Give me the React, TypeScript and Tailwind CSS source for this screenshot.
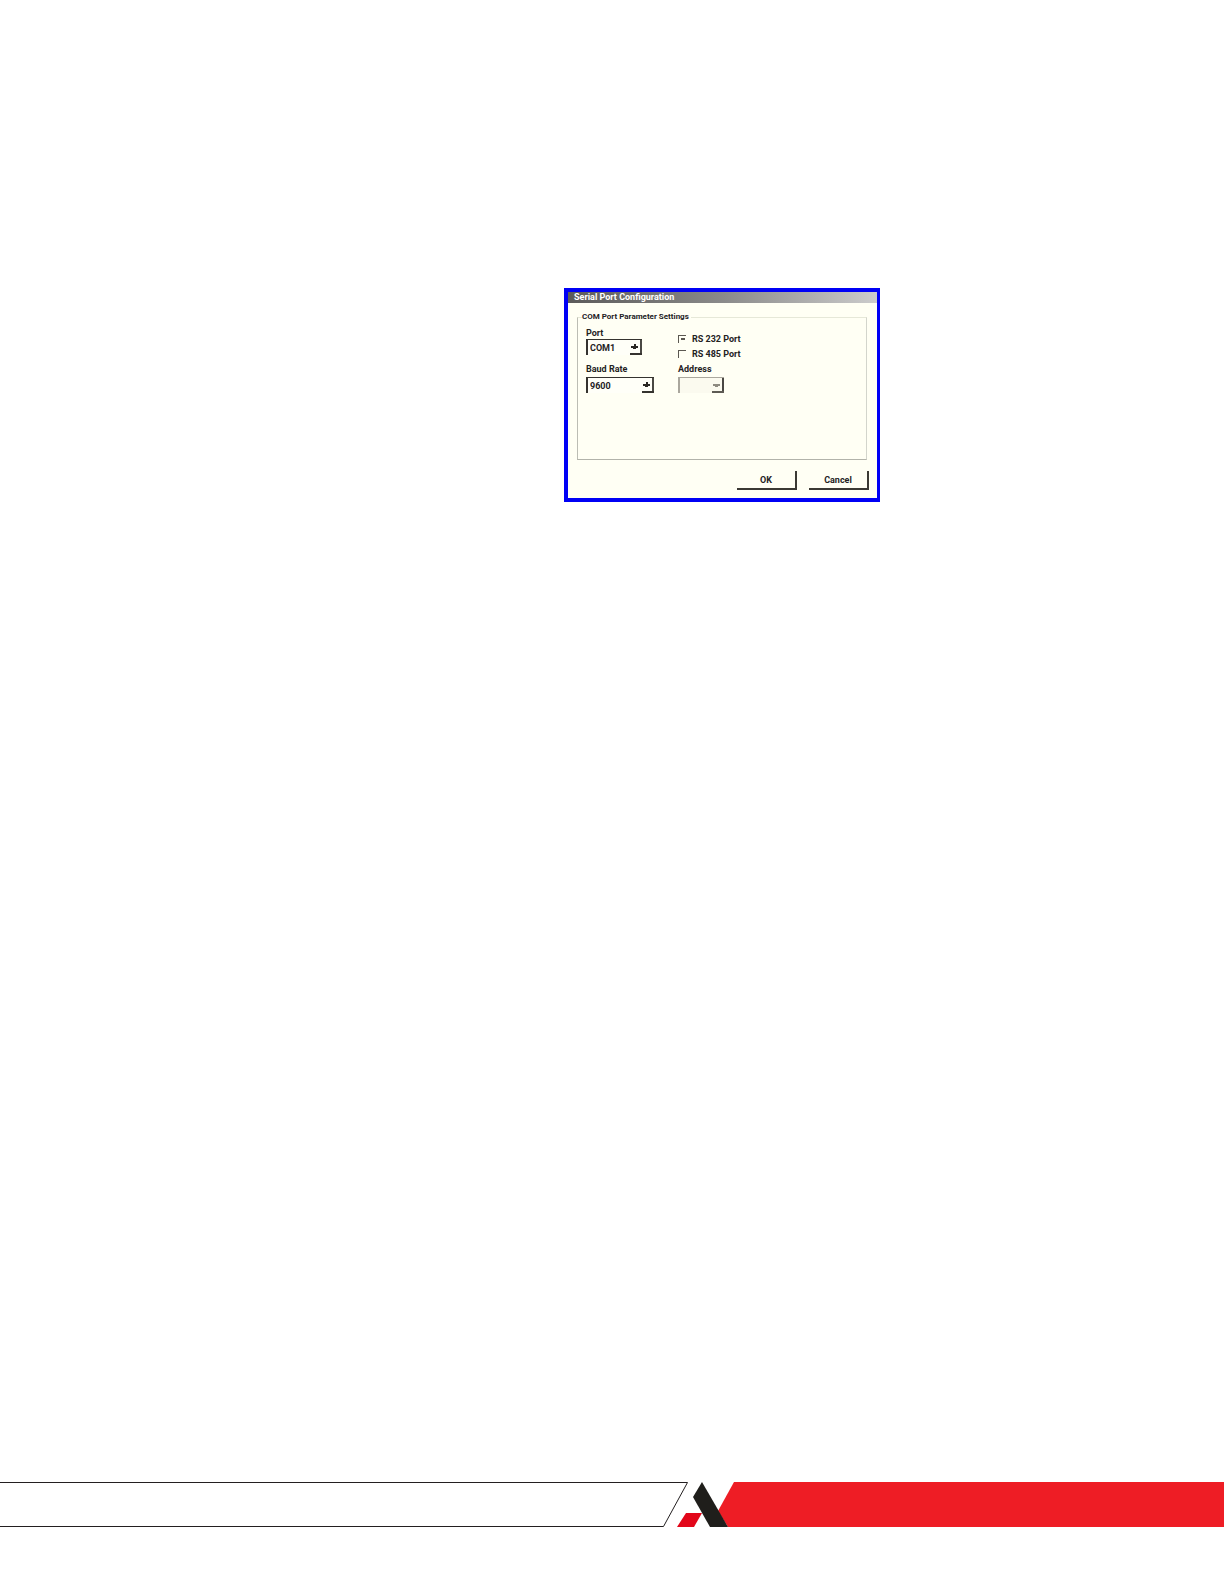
import { useState } from 'react';
import type { ReactNode } from 'react';

const ports = ['COM1', 'COM2', 'COM3', 'COM4'];
const baudRates = ['9600', '19200', '38400', '57600'];
const modes = [
  { id: 'rs232', label: 'RS 232 Port' },
  { id: 'rs485', label: 'RS 485 Port' },
];

type SelectBoxProps = {
  id: string;
  width: string;
  options: string[];
  disabled?: boolean;
};

function SelectBox({ id, width, options, disabled }: SelectBoxProps) {
  const ink = disabled ? '#8d8a80' : '#2a2824';
  return (
    <div className={`relative h-4 ${width}`}>
      <select
        id={id}
        disabled={disabled}
        className={`block h-4 w-full appearance-none border-t border-l-2 px-0.5 text-[9px] leading-3 font-bold text-[#24221f] ${
          disabled ? 'border-[#aaa79d] bg-[#fbfaef]' : 'border-[#35332f] bg-[#fffff8]'
        }`}
      >
        {options.map(o => (
          <option key={o}>{o}</option>
        ))}
      </select>
      {/* drop button */}
      <svg className="pointer-events-none absolute top-0 right-0 h-4 w-3" viewBox="0 0 12 16" aria-hidden="true">
        <path d="M11 1v14.500" stroke="#4a4843" strokeWidth="2" />
        <path d="M0 15h12" stroke={disabled ? '#5e5b54' : '#35332f'} strokeWidth="2" />
        <path d="M1 7h7v2H6v1H3V9H1z" fill={ink} />
        {!disabled && <path d="M4 5h2v2H4z" fill={ink} />}
      </svg>
    </div>
  );
}

function PushButton({ children }: { children: ReactNode }) {
  return (
    <button
      type="button"
      className="h-[19px] w-[60px] border-r-2 border-b-2 border-[#3b3934] bg-[#fffff4] text-[9px] leading-4 font-bold text-[#24221f]"
    >
      {children}
    </button>
  );
}

function SerialPortDialog() {
  const [mode, setMode] = useState('rs232');

  return (
    <section
      aria-labelledby="dialog-title"
      className="flex min-h-[214px] w-[316px] flex-col border-4 border-r-[3px] border-[#0000f5] bg-[#fffff4] text-[9px] leading-3"
    >
      <h1
        id="dialog-title"
        className="bg-linear-to-r from-[#5c5b5a] via-[#8a8a8a] to-[#cccccc] pb-px pl-1.5 leading-[10px] font-bold text-white"
      >
        Serial Port Configuration
      </h1>

      <form className="flex grow flex-col pt-2 pr-2.5 pl-[9px]" onSubmit={e => e.preventDefault()}>
        <fieldset className="h-[149px] border border-t-[#e6e8d8] border-r-[#d3d5cc] border-b-[#b2b3aa] border-l-[#bcbdb4] pt-1 pl-2">
          <legend className="-ml-1 pr-0.5 text-[8px]">COM Port Parameter Settings</legend>

          <div className="flex">
            <div className="w-[92px]">
              <label htmlFor="port" className="block">Port</label>
              <SelectBox id="port" width="w-14" options={ports} />
              <label htmlFor="baud" className="mt-2 block">Baud Rate</label>
              <div className="mt-0.5">
                <SelectBox id="baud" width="w-[68px]" options={baudRates} />
              </div>
            </div>

            <div className="pt-1">
              {modes.map(({ id, label }) => (
                <label key={id} className="flex h-[15px] items-center gap-1.5">
                  <input
                    type="radio"
                    name="mode"
                    value={id}
                    checked={mode === id}
                    onChange={() => setMode(id)}
                    className="flex size-2 appearance-none items-center justify-center border-t border-l border-[#5b5851] before:h-0.5 before:w-1 checked:before:bg-[#5b5851]"
                  />
                  {label}
                </label>
              ))}
              <label htmlFor="address" className="mt-0.5 block">Address</label>
              <div className="mt-0.5">
                <SelectBox id="address" width="w-[46px]" options={['']} disabled />
              </div>
            </div>
          </div>
        </fieldset>

        <div className="mt-[11px] -mr-0.5 flex justify-end gap-3">
          <PushButton>OK</PushButton>
          <PushButton>Cancel</PushButton>
        </div>
      </form>
    </section>
  );
}

function FooterBand() {
  return (
    <footer className="mb-[57px] flex h-[45px]">
      <div className="w-[54%] border-y border-[#231f20]" />
      <svg className="h-[45px] w-[76px] shrink-0" viewBox="0 0 76 45" role="img" aria-label="Logo">
        <path d="M0 .5H26.500L2.500 44.500H0" fill="none" stroke="#231f20" />
        <path d="M25 31H41L33 45H16z" fill="#e2071a" />
        <path d="M73 0H76V45H67L57 29z" fill="#ee1d25" />
        <path d="M41 0L67 45H49L32 15z" fill="#1f1e1b" />
      </svg>
      <div className="grow bg-[#ee1d25]" />
    </footer>
  );
}

export default function App() {
  return (
    <div className="flex min-h-screen flex-col bg-white font-[Roboto,'Liberation_Sans',Arial,sans-serif] font-bold text-[#24221f]">
      <main className="grow pt-72 pl-141">
        <SerialPortDialog />
      </main>
      <FooterBand />
    </div>
  );
}
